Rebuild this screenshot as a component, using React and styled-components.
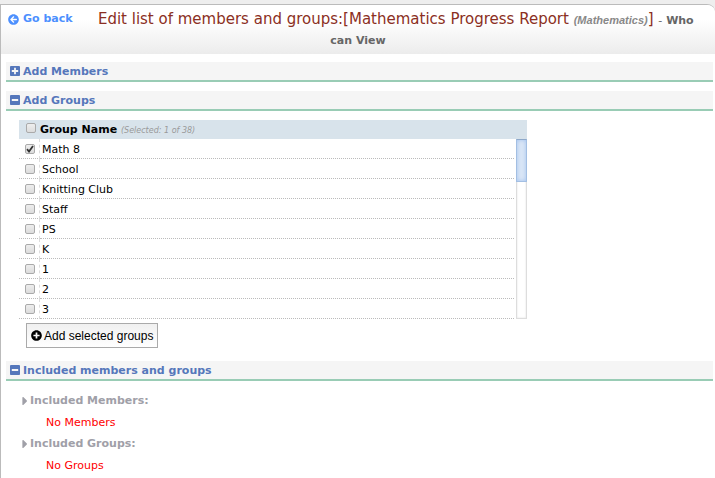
import React, { useState } from "react";
import styled, { createGlobalStyle } from "styled-components";
import {
  FaArrowCircleLeft,
  FaCaretRight,
  FaMinusSquare,
  FaPlusCircle,
  FaPlusSquare,
} from "react-icons/fa";

const groupNames = [
  "Math 8",
  "School",
  "Knitting Club",
  "Staff",
  "PS",
  "K",
  "1",
  "2",
  "3",
];

const TOTAL_GROUPS = 38;

const Section = ({ title, open, onToggle, children }) => (
  <SectionBox>
    <SectionTitle>
      <SectionToggle type="button" aria-expanded={open} onClick={onToggle}>
        {open ? <FaMinusSquare /> : <FaPlusSquare />}
        {title}
      </SectionToggle>
    </SectionTitle>
    {open && children}
  </SectionBox>
);

const App = () => {
  const [open, setOpen] = useState({
    members: false,
    groups: true,
    included: true,
  });
  const [selected, setSelected] = useState(["Math 8"]);

  const toggleSection = (key) => setOpen({ ...open, [key]: !open[key] });

  const toggleGroup = (name) =>
    setSelected(
      selected.includes(name)
        ? selected.filter((n) => n !== name)
        : [...selected, name]
    );

  const allSelected = selected.length === groupNames.length;

  return (
    <>
      <GlobalStyle />
      <Panel>
        <Header>
          <BackLink href="#">
            <FaArrowCircleLeft />
            Go back
          </BackLink>
          <Title>
            Edit list of members and groups:[Mathematics Progress Report{" "}
            <Subject>(Mathematics)</Subject>]{" "}
            <Purpose>
              <Dash>-</Dash> Who can&nbsp;View
            </Purpose>
          </Title>
        </Header>

        <Section
          title="Add Members"
          open={open.members}
          onToggle={() => toggleSection("members")}
        />

        <Section
          title="Add Groups"
          open={open.groups}
          onToggle={() => toggleSection("groups")}
        >
          <Groups>
            <GroupTable>
              <thead>
                <tr>
                  <CheckHead>
                    <Checkbox
                      type="checkbox"
                      aria-label="Select all groups"
                      checked={allSelected}
                      onChange={() => setSelected(allSelected ? [] : groupNames)}
                    />
                  </CheckHead>
                  <NameHead colSpan={2}>
                    Group Name{" "}
                    <Count>
                      (Selected: {selected.length} of {TOTAL_GROUPS})
                    </Count>
                  </NameHead>
                </tr>
              </thead>
              <tbody>
                {groupNames.map((name, i) => (
                  <tr key={name}>
                    <CheckCell>
                      <Checkbox
                        type="checkbox"
                        id={`group-${i}`}
                        checked={selected.includes(name)}
                        onChange={() => toggleGroup(name)}
                      />
                    </CheckCell>
                    <NameCell>
                      <label htmlFor={`group-${i}`}>{name}</label>
                    </NameCell>
                    {i === 0 && (
                      <ScrollCell rowSpan={groupNames.length}>
                        <ScrollTrack>
                          <ScrollThumb />
                        </ScrollTrack>
                      </ScrollCell>
                    )}
                  </tr>
                ))}
              </tbody>
            </GroupTable>
            <AddButton type="button">
              <FaPlusCircle />
              Add selected groups
            </AddButton>
          </Groups>
        </Section>

        <Section
          title="Included members and groups"
          open={open.included}
          onToggle={() => toggleSection("included")}
        >
          <Included>
            <IncludedTitle>
              <FaCaretRight />
              Included Members:
            </IncludedTitle>
            <Empty>No Members</Empty>
            <IncludedTitle>
              <FaCaretRight />
              Included Groups:
            </IncludedTitle>
            <Empty>No Groups</Empty>
          </Included>
        </Section>
      </Panel>
    </>
  );
};

const GlobalStyle = createGlobalStyle`
  * {
    box-sizing: border-box;
  }

  body {
    margin: 0;
    padding-top: 4px;
    background: #eee;
    font-family: Verdana, "DejaVu Sans", sans-serif;
    font-size: 11px;
    color: #000;
  }
`;

const Panel = styled.div`
  min-height: calc(100vh - 4px);
  background: #fff;
  border: 1px solid #bbb;
  border-bottom: 0;
  border-right: 0;
  border-top-right-radius: 8px;
  overflow: hidden;
`;

const Header = styled.header`
  min-height: 49px;
  padding-top: 5px;
  margin-bottom: 8px;
  background: linear-gradient(#fff 30%, #ececec);
`;

const BackLink = styled.a`
  float: left;
  display: flex;
  align-items: center;
  gap: 4px;
  padding: 2px 4px 0 7px;
  font-size: 11px;
  line-height: 14px;
  font-weight: bold;
  color: #4d90fe;
  text-decoration: none;
`;

const Title = styled.h1`
  margin: 0;
  text-align: center;
  font-size: 15px;
  line-height: 18px;
  font-weight: normal;
  color: #8b2f23;
`;

const Subject = styled.em`
  font-family: "Liberation Sans", Arial, sans-serif;
  font-size: 11px;
  font-weight: bold;
  color: #888;
`;

const Purpose = styled.span`
  font-size: 11px;
  font-weight: bold;
  color: #666;
`;

const Dash = styled.span`
  font-weight: normal;
`;

const SectionBox = styled.section`
  margin: 0 2px 9px 5px;

  &:last-child {
    margin-bottom: 0;
  }
`;

const SectionTitle = styled.h2`
  margin: 0;
  background: #f5f5f5;
  border-bottom: 2px solid #99ccb5;
  font-size: 11px;
`;

const SectionToggle = styled.button`
  display: flex;
  align-items: center;
  gap: 3px;
  width: 100%;
  height: 18px;
  padding: 0 4px;
  border: 0;
  background: none;
  font: inherit;
  font-weight: bold;
  color: #5577bb;
  cursor: pointer;

  svg {
    width: 10px;
    height: 12px;
  }
`;

const Groups = styled.div`
  padding: 9px 13px 4px;
`;

const GroupTable = styled.table`
  width: 508px;
  max-width: 100%;
  border-collapse: separate;
  border-spacing: 0;
`;

const CheckHead = styled.th`
  width: 21px;
  height: 19px;
  padding: 0 0 4px 7px;
  background: #d8e3eb;
  line-height: 0;
  text-align: left;
`;

const NameHead = styled.th`
  padding: 0;
  background: #d8e3eb;
  text-align: left;
`;

const Count = styled.em`
  font-size: 8px;
  font-weight: normal;
  color: #999;
`;

const CheckCell = styled.td`
  height: 20px;
  padding: 0 0 0 6px;
  border-right: 1px dashed #ddd;
  border-bottom: 1px dotted #bbb;
  line-height: 0;
`;

const NameCell = styled.td`
  padding: 2px 2px 0;
  border-bottom: 1px dotted #bbb;
`;

const ScrollCell = styled.td`
  width: 13px;
  height: 180px;
  padding: 0 0 0 2px;
`;

const ScrollTrack = styled.div`
  height: 180px;
  background: #fff;
  border: 1px solid #ddd;
  border-top: 0;
  box-shadow: inset 0 0 2px #ddd;
`;

const ScrollThumb = styled.div`
  height: 43px;
  margin: 0 -1px;
  border: 1px solid #a3bfe3;
  border-top-color: #8fa9c9;
  background: #dae6f6;
  box-shadow: inset 0 0 4px #a3c2ee;
`;

const Checkbox = styled.input`
  appearance: none;
  display: inline-block;
  width: 10px;
  height: 10px;
  margin: 0;
  border: 1px solid #aaa;
  border-radius: 2px;
  background: linear-gradient(#eee, #dcdcdc);

  &:checked {
    background: url("data:image/svg+xml,%3Csvg xmlns='http://www.w3.org/2000/svg' viewBox='0 0 8 8'%3E%3Cpath d='M1 4.2 3 6.5 7 1' fill='none' stroke='%23333' stroke-width='1.8'/%3E%3C/svg%3E")
        center / 8px 8px no-repeat,
      linear-gradient(#eee, #dcdcdc);
  }
`;

const AddButton = styled.button`
  display: flex;
  align-items: center;
  gap: 2px;
  height: 25px;
  margin: 4px 0 0 7px;
  padding: 0 4px;
  border: 1px solid #aaa;
  background: linear-gradient(#f0f0f0, #fff);
  font-family: "Liberation Sans", Arial, sans-serif;
  font-size: 12px;
  color: #000;
  cursor: pointer;

  svg {
    width: 11px;
    height: 11px;
  }
`;

const Included = styled.div`
  padding: 13px 16px 0;
`;

const IncludedTitle = styled.h3`
  display: flex;
  align-items: center;
  gap: 2px;
  margin: 0;
  font-size: 11px;
  line-height: 14px;
  color: #a0a0a8;

  svg {
    width: 6px;
    height: 14px;
  }
`;

const Empty = styled.p`
  margin: 8px 24px 7px;
  line-height: 14px;
  color: #f00;

  &:last-child {
    margin-bottom: 0;
  }
`;

export default App;
